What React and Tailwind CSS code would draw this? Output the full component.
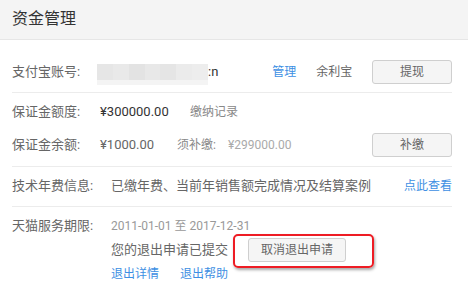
import React from 'react';

const FONT = { fontFamily: "Roboto, 'Noto Sans CJK SC', sans-serif" };

function Btn({ children, className = '' }) {
  return (
    <div className={`flex items-center justify-center rounded-[3px] border border-[#cfcfcf] bg-[#f5f5f5] text-[12px] text-[#666] ${className}`}>
      {children}
    </div>
  );
}

function Blur() {
  const cells = ['#e6e6e6', '#e9e9e9', '#e3e3e3', '#e8e8e8', '#e5e5e5', '#ebebeb', '#ededed'];
  return (
    <div className="flex h-[21px] w-[111px] flex-col">
      <div className="flex h-[16px]">
        {cells.map((c, i) => (
          <div key={i} className="h-full flex-1" style={{ background: c }} />
        ))}
      </div>
      <div className="h-[5px] bg-[#f4f4f4]" />
    </div>
  );
}

export default function App() {
  return (
    <div className="h-[290px] w-[468px] overflow-hidden bg-white" style={FONT}>
      <div className="flex h-[40px] items-center border-b border-[#e6e6e6] bg-[#f4f4f4] pl-3 pb-[2px] text-[16px] text-[#333]">
        资金管理
      </div>

      <div className="ml-3 mr-4">
        {/* account */}
        <div className="border-b border-[#ececec] pt-[20px] pb-[8px]">
          <div className="flex h-[24px] items-center text-[13px] text-[#666]">
            <span className="w-[85px]">支付宝账号:</span>
            <div className="mt-[4px]"><Blur /></div>
            <span className="text-[#333]">:n</span>
            <span className="ml-[54px] text-[12px] text-[#3d8fe3]">管理</span>
            <span className="ml-[20px] text-[12px] text-[#666]">余利宝</span>
            <Btn className="ml-auto h-[24px] w-[80px]">提现</Btn>
          </div>
        </div>

        {/* deposit */}
        <div className="flex flex-col gap-[9px] border-b border-[#ececec] pt-[7px] pb-[9px]">
          <div className="flex h-[24px] items-center text-[13px] text-[#666]">
            <span className="w-[88px]">保证金额度:</span>
            <span className="w-[90px] text-[#333]">¥300000.00</span>
            <span className="text-[12px] text-[#888]">缴纳记录</span>
          </div>
          <div className="flex h-[24px] items-center text-[13px] text-[#666]">
            <span className="w-[88px]">保证金余额:</span>
            <span className="w-[77px]">¥1000.00</span>
            <span className="w-[51px] text-[12px] text-[#888]">须补缴:</span>
            <span className="text-[12px] text-[#aaa]">¥299000.00</span>
            <Btn className="ml-auto h-[24px] w-[80px]">补缴</Btn>
          </div>
        </div>

        {/* fee */}
        <div className="border-b border-[#ececec] pt-[7px] pb-[8px]">
          <div className="flex h-[24px] items-center text-[13px] text-[#666]">
            <span className="w-[99px]">技术年费信息:</span>
            <span>已缴年费、当前年销售额完成情况及结算案例</span>
            <span className="ml-auto text-[12px] text-[#3d8fe3]">点此查看</span>
          </div>
        </div>

        {/* service period */}
        <div className="flex pt-[7px]">
          <span className="flex h-[24px] w-[99px] items-center text-[13px] text-[#666]">天猫服务期限:</span>
          <div className="flex flex-col">
            <div className="flex h-[24px] items-center text-[12px] text-[#999]">2011-01-01 至 2017-12-31</div>
            <div className="relative flex h-[24px] items-center text-[13px] text-[#666]">
              <span>您的退出申请已提交</span>
              <Btn className="ml-[20px] h-[24px] w-[98px]">取消退出申请</Btn>
              <div className="absolute left-[122px] top-[-4px] h-[34px] w-[141px] rounded-[5px] border-2 border-[#ee1c24] shadow-[1px_2px_3px_rgba(0,0,0,0.35)]" />
            </div>
            <div className="flex h-[24px] items-center gap-[21px] text-[12px] text-[#3d8fe3]">
              <span>退出详情</span>
              <span>退出帮助</span>
            </div>
          </div>
        </div>
      </div>
    </div>
  );
}
